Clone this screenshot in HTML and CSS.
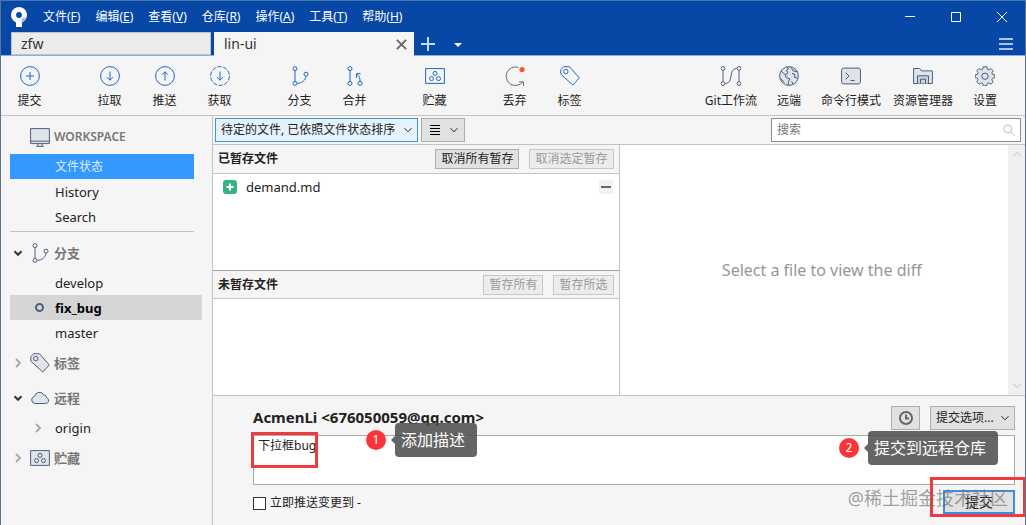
FILE: index.html
```
<!DOCTYPE html>
<html lang="zh">
<head>
    <meta charset="UTF-8">
    <meta name="viewport" content="width=device-width, initial-scale=1.0">
    <title>lin-ui</title>
    <link rel="stylesheet" href="styles.css">
</head>
<body>
    <svg class="symbols" aria-hidden="true">
        <symbol id="i-branch" viewBox="0 0 20 20">
            <path d="M5 4.6v10.8M16 10.2c-.5 4.2-4 6.9-8.8 7.2"/>
            <circle cx="5" cy="2.6" r="2"/><circle cx="5" cy="17.4" r="2"/><circle cx="16" cy="8.2" r="2"/>
        </symbol>
        <symbol id="i-tag" viewBox="0 0 20 20">
            <path d="M.8 3.6 3.8.7h5.6l9.9 11.2-6.4 7.2L.8 8.2z"/>
            <circle cx="5.8" cy="5.6" r="2.2"/>
        </symbol>
        <symbol id="i-stash" viewBox="0 0 20 20">
            <path d="M.6 2.6h18.8v14.8H.6z"/>
            <circle cx="10" cy="7.4" r="2"/><circle cx="6.5" cy="12.6" r="2"/><circle cx="13.5" cy="12.6" r="2"/>
        </symbol>
        <symbol id="i-down" viewBox="0 0 10 10"><path d="M1.5 3.2 5 6.8l3.5-3.6"/></symbol>
        <symbol id="i-right" viewBox="0 0 10 10"><path d="M3 1l4 4-4 4"/></symbol>
    </svg>

    <header class="titlebar">
        <div class="menu-row">
            <svg class="logo" viewBox="0 0 16 20">
                <path d="M8 0a8 8 0 0 1 3 15.4V20H5v-4.6A8 8 0 0 1 8 0z" fill="#fff"/>
                <path d="M10.5 15.6V11l4.4-.6a8 8 0 0 1-4.4 5.2z" fill="#a9bfe0"/>
                <circle cx="8" cy="8" r="2.9" fill="#0747a6"/>
            </svg>
            <nav class="menu">
                <a href="#">文件(<u>F</u>)</a>
                <a href="#">编辑(<u>E</u>)</a>
                <a href="#">查看(<u>V</u>)</a>
                <a href="#">仓库(<u>R</u>)</a>
                <a href="#">操作(<u>A</u>)</a>
                <a href="#">工具(<u>T</u>)</a>
                <a href="#">帮助(<u>H</u>)</a>
            </nav>
            <div class="window-controls">
                <button aria-label="最小化"><svg viewBox="0 0 12 12"><path d="M1 5.5h10"/></svg></button>
                <button aria-label="最大化"><svg viewBox="0 0 12 12"><path d="M1.5 1.5h9v9h-9z"/></svg></button>
                <button aria-label="关闭"><svg viewBox="0 0 12 12"><path d="M1 1l10 10M11 1 1 11"/></svg></button>
            </div>
        </div>
        <div class="tab-row">
            <button class="tab">zfw</button>
            <button class="tab active">lin-ui
                <svg viewBox="0 0 12 12"><path d="M1 1l10 10M11 1 1 11"/></svg>
            </button>
            <button class="tab-tool" aria-label="新标签页"><svg viewBox="0 0 14 14"><path d="M7 0v14M0 7h14"/></svg></button>
            <button class="tab-tool" aria-label="标签列表"><svg viewBox="0 0 14 14"><path class="caret" d="M3 6h8l-4 4z"/></svg></button>
            <button class="hamburger" aria-label="菜单"><svg viewBox="0 0 14 12"><path d="M0 1h14M0 6h14M0 11h14"/></svg></button>
        </div>
    </header>

    <div class="toolbar">
        <div class="tool-group">
            <button><svg viewBox="0 0 20 20"><circle cx="10" cy="10" r="9.4"/><path d="M10 6v8M6 10h8"/></svg>提交</button>
        </div>
        <div class="tool-group">
            <button><svg viewBox="0 0 20 20"><circle cx="10" cy="10" r="9.4"/><path d="M10 5.5v8.7M7 11.2l3 3 3-3"/></svg>拉取</button>
            <button><svg viewBox="0 0 20 20"><circle cx="10" cy="10" r="9.4"/><path d="M10 14.5V5.8M7 8.8l3-3 3 3"/></svg>推送</button>
            <button><svg viewBox="0 0 20 20"><circle cx="10" cy="10" r="9.4" stroke-dasharray="4.4 1.5"/><path d="M10 5.5v8.7M7 11.2l3 3 3-3"/></svg>获取</button>
        </div>
        <div class="tool-group">
            <button><svg><use href="#i-branch"/></svg>分支</button>
            <button><svg viewBox="0 0 20 20"><path d="M5 4.6v10.8M15 15.4c.2-3.2-.7-5.4-3-7.2M11.6 12V7.7h4"/><circle cx="5" cy="2.6" r="2"/><circle cx="5" cy="17.4" r="2"/><circle cx="15" cy="17.4" r="2"/></svg>合并</button>
        </div>
        <div class="tool-group">
            <button><svg><use href="#i-stash"/></svg>贮藏</button>
        </div>
        <div class="tool-group">
            <button><svg class="gray" viewBox="0 0 20 20"><path d="M13.4 1.4a9.3 9.3 0 1 0 4.4 14.5M14 15.9h4.5v4"/><circle class="dot" cx="17" cy="3.6" r="2.6"/></svg>丢弃</button>
            <button><svg><use href="#i-tag"/></svg>标签</button>
        </div>
        <div class="tool-group right">
            <button><svg class="slate" viewBox="0 0 20 20"><path d="M2 4.4v11.2M18 4.4v11.2M4.2 17.6C13 17.6 7 2.4 15.8 2.4"/><circle cx="2" cy="2.4" r="1.9"/><circle cx="2" cy="17.6" r="1.9"/><circle cx="18" cy="2.4" r="1.9"/><circle cx="18" cy="17.6" r="1.9"/></svg>Git工作流</button>
            <button><svg class="slate" viewBox="0 0 20 20"><circle class="fill" cx="10" cy="10" r="9.4"/><path class="land" d="M8 .8 9.5 3 7 4.5l2.2 2-3 2.3 1 2.7 3.8 1.5-1.6 2.8-.2 3.4M2 5l4 3.6M1 12l4.5 4.5M12 1l2 3.8 4.7 1M13 7.5l3 .8-.5 3 3.2 1M14 18.4l-1.2-3"/></svg>远端</button>
            <button><svg class="slate" viewBox="0 0 20 20"><rect class="fill" x=".6" y="2.1" width="18.8" height="15.8" rx="2"/><path d="M4.6 6.6 8 10l-3.4 3.4M9.5 14.5h4.2"/></svg>命令行模式</button>
            <button><svg class="slate" viewBox="0 0 20 20"><path class="fill" d="M.6 17.5v-15h6l2 2.4h10.8v12.6z"/><path class="land" d="M4.5 17.5v-7.7h11v7.7M7.5 17.5v-4.3h5v4.3"/></svg>资源管理器</button>
            <button><svg class="slate" viewBox="0 0 20 20"><path class="fill" d="M8.2.8h3.6l.5 2.4 1.6.7 2-1.4 2.3 2.3-1.3 2.1.6 1.5 2.3.4v2.9l-2.3.6-.7 1.6 1.4 2-2.4 2.4-2-1.4-1.6.7-.4 2.2H8.2l-.5-2.2-1.6-.7-2 1.4-2.4-2.4 1.4-2-.7-1.6-2.2-.5V8.8l2.3-.5.6-1.6-1.3-2 2.3-2.3 2 1.4 1.6-.7z"/><circle cx="10" cy="10.2" r="3.2"/></svg>设置</button>
        </div>
    </div>

    <div class="workspace">
        <aside class="sidebar">
            <section>
                <h2 class="title"><svg class="slate" viewBox="0 0 20 20"><path class="fill" d="M.6 1.6h18.8v15H.6zM.6 14.2h18.8M8 17v2M12 17v2M6 19.3h8"/></svg>WORKSPACE</h2>
                <a class="selected" href="#">文件状态</a>
                <a href="#">History</a>
                <a href="#">Search</a>
            </section>
            <section>
                <h2 class="open"><svg class="arrow"><use href="#i-down"/></svg><svg class="slate"><use href="#i-branch"/></svg>分支</h2>
                <a href="#">develop</a>
                <a class="current" href="#">fix_bug</a>
                <a href="#">master</a>
            </section>
            <section>
                <h2><svg class="arrow"><use href="#i-right"/></svg><svg class="slate fill"><use href="#i-tag"/></svg>标签</h2>
            </section>
            <section>
                <h2 class="open"><svg class="arrow"><use href="#i-down"/></svg><svg class="slate" viewBox="0 0 20 20"><path class="fill" d="M5 15.5a3.7 3.7 0 0 1-.4-7.3 5 5 0 0 1 9.3-1.2c2 .1 2.7 1.4 2.6 2.8 3 .8 2.8 5.5-.7 5.7z"/></svg>远程</h2>
                <a class="remote" href="#"><svg class="arrow"><use href="#i-right"/></svg>origin</a>
            </section>
            <section>
                <h2><svg class="arrow"><use href="#i-right"/></svg><svg class="slate fill"><use href="#i-stash"/></svg>贮藏</h2>
            </section>
        </aside>

        <main>
            <div class="filter-bar">
                <div class="select blue">
                    <select aria-label="文件排序"><option>待定的文件, 已依照文件状态排序</option></select>
                    <svg><use href="#i-down"/></svg>
                </div>
                <button class="view-button" aria-label="视图">
                    <svg class="lines" viewBox="0 0 10 12"><path d="M0 1.5h10M0 4.5h10M0 7.5h10M0 10.5h10"/></svg>
                    <svg class="chevron"><use href="#i-down"/></svg>
                </button>
                <div class="search">
                    <input type="text" placeholder="搜索" aria-label="搜索">
                    <svg viewBox="0 0 12 12"><circle cx="4.8" cy="4.8" r="4"/><path d="M7.8 7.8l3.7 3.7"/></svg>
                </div>
            </div>

            <div class="panes">
                <div class="files">
                    <div class="file-header">
                        <h3>已暂存文件</h3>
                        <button>取消所有暂存</button>
                        <button disabled>取消选定暂存</button>
                    </div>
                    <div class="file-list">
                        <div class="file">
                            <svg class="added" viewBox="0 0 14 14"><rect width="14" height="14" rx="3"/><path d="M7 3.5v7M3.5 7h7"/></svg>
                            <span>demand.md</span>
                            <button aria-label="取消暂存"><svg viewBox="0 0 14 14"><path d="M2 7h10"/></svg></button>
                        </div>
                    </div>
                    <div class="file-header unstaged">
                        <h3>未暂存文件</h3>
                        <button disabled>暂存所有</button>
                        <button disabled>暂存所选</button>
                    </div>
                    <div class="file-list"></div>
                </div>
                <div class="diff">
                    <p>Select a file to view the diff</p>
                    <div class="scrollbar">
                        <svg class="up"><use href="#i-down"/></svg>
                        <svg><use href="#i-down"/></svg>
                    </div>
                </div>
            </div>

            <form class="commit">
                <div class="commit-header">
                    <strong>AcmenLi &lt;676050059@qq.com&gt;</strong>
                    <button class="history" type="button" aria-label="历史消息"><svg viewBox="0 0 14 14"><circle cx="7" cy="7" r="6"/><path d="M7 3.5v4h3"/></svg></button>
                    <div class="select options">
                        <select aria-label="提交选项"><option>提交选项...</option></select>
                        <svg><use href="#i-down"/></svg>
                    </div>
                </div>
                <div class="message">
                    <textarea aria-label="提交信息" spellcheck="false">下拉框bug</textarea>
                    <div class="mark"></div>
                    <div class="callout first"><b>1</b><span>添加描述</span></div>
                    <div class="callout second"><b>2</b><span>提交到远程仓库</span></div>
                </div>
                <div class="commit-footer">
                    <label><input type="checkbox">立即推送变更到 -</label>
                    <div class="submit">
                        <button type="button">提交</button>
                        <div class="mark"></div>
                        <div class="watermark">@稀土掘金技术社区</div>
                    </div>
                </div>
            </form>
        </main>
    </div>
</body>
</html>
```
FILE: styles.css
```
:root {
    --primary: #0747a6;
    --icon: #2067c9;
    --slate: #505f79;
    --background: #f5f5f5;
    --text: #222222;
    --border: #c3c3c3;
    --button: #e1e1e1;
    --red: #f03a3c;
}

*,
*::before {
    box-sizing: border-box;
}

body {
    font-family: "Noto Sans", "Noto Sans CJK SC", sans-serif;
    font-size: 12px;
    line-height: 16px;
    color: var(--text);
    background: var(--background);
    margin: 0;
    height: 100vh;
    overflow: hidden;
    display: flex;
    flex-direction: column;
    border-left: 1px solid #5d7392;
    border-right: 1px solid #5d7392;
}

button, input, select, textarea {
    font: inherit;
    color: inherit;
    margin: 0;
    border-radius: 0;
}

button {
    padding: 0;
    border: none;
    background: none;
}

a {
    color: inherit;
    text-decoration: none;
}

svg {
    display: block;
    flex: none;
    fill: none;
    stroke: currentColor;
}

.symbols {
    position: absolute;
    width: 0;
    height: 0;
}

/* title bar */
.titlebar {
    background: var(--primary);
    color: #ffffff;
    border-top: 1px solid #4479b0;
    border-bottom: 1px solid #8faee0;
}

.menu-row {
    display: flex;
    align-items: center;
    height: 31px;
    padding-left: 10px;
}

.logo {
    width: 16px;
    height: 20px;
    stroke: none;
}

.menu {
    display: flex;
    flex: 1;
    gap: 15px;
    margin-left: 16px;
}

.window-controls {
    display: flex;
}

.window-controls button {
    display: grid;
    place-items: center;
    width: 46px;
    height: 30px;
}

.window-controls svg {
    width: 12px;
    height: 12px;
}

.tab-row {
    display: flex;
    align-items: center;
    height: 23px;
    padding: 0 12px 0 10px;
}

.tab {
    display: flex;
    align-items: center;
    justify-content: space-between;
    width: 200px;
    height: 23px;
    padding: 0 6px 0 9px;
    margin-right: 3px;
    border: 1px solid #b8c4d4;
    background: #ebebeb;
    color: #333333;
    font-size: 14px;
}

.tab.active {
    height: 24px;
    margin-bottom: -1px;
    margin-right: 7px;
    background: var(--background);
    border-color: var(--background);
}

.tab svg {
    width: 11px;
    height: 11px;
    stroke-width: 2;
    color: #666666;
}

.tab-tool {
    width: 14px;
    margin-right: 16px;
    color: #c7dbf7;
}

.tab-tool svg {
    width: 14px;
    height: 14px;
    stroke-width: 2;
}

.tab-tool .caret {
    fill: #ffffff;
    stroke: none;
}

.hamburger {
    margin-left: auto;
    color: #a9c3ec;
}

.hamburger svg {
    width: 14px;
    height: 12px;
    stroke-width: 2;
}

/* toolbar */
.toolbar {
    display: flex;
    gap: 25px;
    height: 60px;
    padding: 10px 15px 0 1px;
    border-bottom: 1px solid var(--border);
}

.tool-group {
    display: flex;
    color: var(--text);
}

.tool-group button {
    display: flex;
    flex-direction: column;
    align-items: center;
    gap: 7px;
    width: 55px;
    white-space: nowrap;
}

.tool-group svg {
    width: 20px;
    height: 20px;
    color: var(--icon);
}

.tool-group .gray {
    color: #6b6b76;
}

.slate,
.tool-group .slate {
    color: var(--slate);
}

.fill {
    fill: #dfe3ec;
}

.land {
    fill: #c9d0e0;
}

.dot {
    fill: #ff5630;
    stroke: none;
}

.tool-group.right {
    margin-left: auto;
    gap: 2px;
}

.tool-group.right button {
    width: auto;
    min-width: 50px;
    padding: 0 5px;
}

/* sidebar */
.workspace {
    display: flex;
    flex: 1;
    min-height: 0;
}

.sidebar {
    width: 212px;
    padding: 4px 10px 0 9px;
    border-right: 1px solid var(--border);
    font-size: 13px;
}

.sidebar section {
    margin-bottom: 1px;
}

.sidebar section:first-child {
    margin: 0 8px 4px 0;
    padding-bottom: 2px;
    border-bottom: 1px solid var(--border);
}

.sidebar h2 {
    display: flex;
    align-items: center;
    gap: 4px;
    height: 34px;
    margin: 0;
    font-size: 13px;
    font-weight: 600;
    color: #777777;
}

.sidebar .title {
    padding-left: 20px;
    font-size: 12px;
}

.sidebar h2 svg {
    width: 20px;
    height: 20px;
}

.sidebar .arrow,
.sidebar h2 .arrow {
    width: 10px;
    height: 10px;
    margin: 0 3px;
    color: #aaaaaa;
    stroke-width: 2;
}

.sidebar h2.open .arrow {
    color: #333333;
}

.sidebar h2 .arrow {
    margin-right: -1px;
}

.sidebar h2 .arrow + svg {
    margin-left: 4px;
}

.sidebar a {
    display: flex;
    align-items: center;
    height: 25px;
    padding-left: 45px;
}

.sidebar .selected {
    background: #3399ff;
    color: #ddeeff;
    font-size: 12px;
}

.sidebar .current {
    background: #d5d5d5;
    color: #000000;
    font-weight: bold;
    padding-left: 25px;
}

.current::before {
    content: "";
    width: 9px;
    height: 9px;
    margin-right: 11px;
    border: 2px solid var(--slate);
    border-radius: 50%;
}

.sidebar .remote {
    gap: 9px;
    padding-left: 20px;
}

/* filter bar */
main {
    display: flex;
    flex-direction: column;
    flex: 1;
    min-width: 0;
}

.filter-bar {
    display: flex;
    gap: 3px;
    height: 29px;
    padding: 2px 4px 2px 2px;
    border-bottom: 1px solid var(--border);
}

.select {
    position: relative;
}

.select select {
    appearance: none;
    width: 100%;
    height: 24px;
    padding: 0 16px 0 5px;
    border: 1px solid #adadad;
    background: var(--button);
}

.select.blue select {
    width: 203px;
    border-color: #3c96d8;
    background: #e5f1fb;
}

.select svg {
    position: absolute;
    right: 5px;
    top: 7px;
    width: 10px;
    height: 10px;
    pointer-events: none;
}

.view-button {
    display: flex;
    align-items: center;
    justify-content: space-between;
    width: 44px;
    height: 24px;
    padding: 0 5px 0 8px;
    border: 1px solid #adadad;
    background: var(--button);
}

.lines {
    width: 10px;
    height: 12px;
    color: #000000;
}

.chevron {
    width: 10px;
    height: 10px;
}

.search {
    display: flex;
    align-items: center;
    width: 250px;
    height: 24px;
    padding: 0 5px;
    margin-left: auto;
    border: 1px solid #8c8c8c;
    background: #ffffff;
}

.search input {
    flex: 1;
    min-width: 0;
    padding: 0;
    border: none;
    outline: none;
}

.search input::placeholder {
    color: #777777;
}

.search svg {
    width: 12px;
    height: 12px;
    color: #bbbbbb;
}

/* file lists */
.panes {
    display: flex;
    flex: 1;
    min-height: 0;
}

.files,
.diff {
    flex: 1 1 0;
    min-width: 0;
    background: #ffffff;
}

.files {
    display: flex;
    flex-direction: column;
    border-right: 1px solid var(--border);
}

.file-header {
    display: flex;
    align-items: center;
    gap: 10px;
    height: 29px;
    padding: 0 5px;
    background: var(--background);
    border-bottom: 1px solid var(--border);
}

.file-header.unstaged {
    border-top: 1px solid #a0a0a0;
}

.file-header h3 {
    flex: 1;
    margin: 0;
    font-size: 12px;
    font-weight: bold;
}

.file-header button {
    height: 20px;
    padding: 0 5px;
    border: 1px solid #adadad;
    background: var(--button);
}

.file-header button:disabled {
    color: #9a9a9a;
    border-color: #c8c8c8;
    background: #ececec;
}

.file-list {
    flex: 1;
}

.file {
    display: flex;
    align-items: center;
    height: 26px;
    padding: 0 6px 0 10px;
    font-size: 13px;
}

.file span {
    flex: 1;
    margin-left: 9px;
}

.added {
    width: 14px;
    height: 14px;
    stroke: #ffffff;
    stroke-width: 2;
}

.added rect {
    fill: #36b37e;
    stroke: none;
}

.file button {
    background: #f2f2f2;
    color: #666666;
}

.file button svg {
    width: 14px;
    height: 14px;
    stroke-width: 2;
}

.diff {
    display: flex;
}

.diff p {
    flex: 1;
    align-self: center;
    margin: 0;
    padding-left: 16px;
    text-align: center;
    font-size: 16px;
    line-height: 24px;
    color: #969696;
}

.scrollbar {
    display: flex;
    flex-direction: column;
    justify-content: space-between;
    align-items: center;
    width: 17px;
    padding: 4px 0;
    background: #f0f0f0;
    color: #bfbfbf;
}

.scrollbar svg {
    width: 10px;
    height: 10px;
}

.scrollbar .up {
    transform: rotate(180deg);
}

/* commit form */
.commit {
    height: 130px;
    padding: 10px 10px 0 40px;
    border-top: 1px solid var(--border);
}

.commit-header {
    display: flex;
    gap: 10px;
    height: 29px;
}

.commit-header strong {
    flex: 1;
    font-size: 15px;
    line-height: 22px;
}

.history {
    display: grid;
    place-items: center;
    width: 29px;
    height: 24px;
    border: 1px solid #adadad;
    background: var(--button);
}

.history svg {
    width: 14px;
    height: 14px;
    color: #666666;
    stroke-width: 2;
}

.options {
    width: 85px;
}

.message,
.submit {
    position: relative;
}

.message textarea {
    display: block;
    width: 100%;
    height: 50px;
    padding: 2px 4px;
    border: 1px solid #ababab;
    background: #ffffff;
    resize: none;
    outline: none;
}

.mark {
    position: absolute;
    border: 3px solid var(--red);
    pointer-events: none;
}

.message .mark {
    left: -2px;
    top: -3px;
    width: 67px;
    height: 36px;
}

.submit .mark {
    left: -13px;
    right: -11px;
    top: -13px;
    height: 40px;
}

.callout {
    position: absolute;
    display: flex;
    align-items: center;
    gap: 9px;
    color: #ffffff;
}

.callout.first {
    left: 113px;
    top: -12px;
}

.callout.second {
    right: 17px;
    top: -4px;
}

.callout b {
    width: 20px;
    height: 20px;
    border-radius: 50%;
    background: #fb3439;
    font-weight: normal;
    line-height: 20px;
    text-align: center;
}

.callout span {
    position: relative;
    height: 34px;
    padding: 0 12px 0 6px;
    border-radius: 4px;
    background: rgba(80, 80, 80, 0.88);
    font-size: 16px;
    line-height: 34px;
}

.callout span::before {
    content: "";
    position: absolute;
    left: -4px;
    top: 13px;
    border: 4px solid transparent;
    border-left: none;
    border-right-color: #606060;
}

.commit-footer {
    display: flex;
    justify-content: space-between;
    padding-top: 5px;
}

.commit-footer label {
    display: flex;
    align-items: center;
    gap: 4px;
    height: 26px;
}

.commit-footer input {
    appearance: none;
    width: 13px;
    height: 13px;
    border: 1px solid #333333;
    background: #ffffff;
}

.submit button {
    width: 72px;
    height: 24px;
    border: 2px solid #3c8fe0;
    background: var(--button);
    font-size: 14px;
}

.watermark {
    position: absolute;
    right: 7px;
    top: -5px;
    font-size: 18px;
    line-height: 26px;
    white-space: nowrap;
    color: rgba(110, 110, 110, 0.65);
    pointer-events: none;
}
```
